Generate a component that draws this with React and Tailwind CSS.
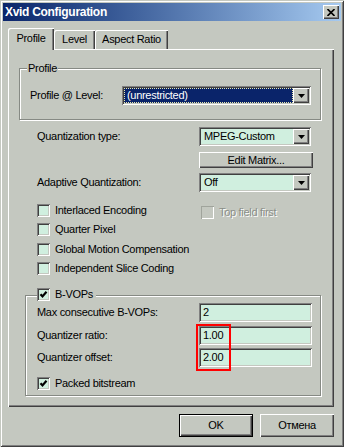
const sunken = 'shadow-[inset_1px_1px_0_#808080,inset_-1px_-1px_0_#ffffff,inset_2px_2px_0_#404040,inset_-2px_-2px_0_#c4c8c0]'
const raised = 'shadow-[inset_1px_1px_0_#ffffff,inset_-1px_-1px_0_#404040,inset_-2px_-2px_0_#808080]'

function Arrow() {
  return (
    <div className={`${raised} w-[16px] h-[15px] bg-[#c4c8c0] flex items-center justify-center shrink-0`}>
      <svg width="7" height="4" viewBox="0 0 7 4">
        <path d="M0 0h7L3.5 4z" fill="#000" />
      </svg>
    </div>
  )
}

function Dropdown({ value, className, selected }) {
  return (
    <div className={`${sunken} ${className} h-[19px] bg-[#d0efdf] flex items-center p-[2px]`}>
      {selected ? (
        <div className="flex-1 h-[15px] bg-[#0a246a] text-white border border-dotted border-[#e8e8b0] pl-[2px] leading-[13px]">
          {value}
        </div>
      ) : (
        <div className="flex-1 pl-[3px] leading-[15px]">{value}</div>
      )}
      <Arrow />
    </div>
  )
}

function TextBox({ value }) {
  return (
    <div className={`${sunken} w-[113px] h-[19px] bg-[#d0efdf] pl-[4px] leading-[19px]`}>{value}</div>
  )
}

function Check({ checked, disabled }) {
  return (
    <div
      className={`w-[13px] h-[13px] shrink-0 flex items-center justify-center ${
        disabled
          ? 'shadow-[inset_1px_1px_0_#a0a49c,inset_-1px_-1px_0_#ffffff] bg-[#c4c8c0]'
          : `${sunken} bg-[#d0efdf]`
      }`}
    >
      {checked && (
        <svg width="9" height="9" viewBox="0 0 9 9">
          <path d="M1.5 4.2l2 2.2 4-4.6" fill="none" stroke="#000" strokeWidth="2.2" />
        </svg>
      )}
    </div>
  )
}

function CheckRow({ label, checked, className = '' }) {
  return (
    <div className={`flex items-center gap-[5px] h-[13px] ${className}`}>
      <Check checked={checked} />
      <span className="leading-[13px]">{label}</span>
    </div>
  )
}

function Row({ label, children, className = '', labelW = 'w-[162px]' }) {
  return (
    <div className={`flex items-center h-[19px] ${className}`}>
      <span className={`${labelW} shrink-0`}>{label}</span>
      {children}
    </div>
  )
}

export default function App() {
  return (
    <div className="w-[344px] h-[447px] bg-[#c4c8c0] p-[3px] flex flex-col text-[11px] leading-[13px] tracking-[-0.3px] text-black [font-family:Liberation_Sans,Arial,sans-serif] shadow-[inset_1px_1px_0_#c4c8c0,inset_-1px_-1px_0_#404040,inset_2px_2px_0_#ffffff,inset_-2px_-2px_0_#808080]">
      {/* title bar */}
      <div className="h-[18px] bg-gradient-to-r from-[#0a246a] to-[#a6caf0] flex items-center justify-between pl-[2px] pr-[2px]">
        <span className="text-white font-bold text-[12px]">Xvid Configuration</span>
        <div className={`${raised} w-[16px] h-[14px] bg-[#c4c8c0] flex items-center justify-center`}>
          <svg width="8" height="7" viewBox="0 0 8 7">
            <path d="M0.5 0l7 7M7.5 0l-7 7" stroke="#000" strokeWidth="1.6" />
          </svg>
        </div>
      </div>

      {/* tabs */}
      <div className="mt-[7px] h-[21px] pl-[5px] flex items-end">
        <div className="relative z-10 -mb-[1px] w-[46px] h-[22px] bg-[#c4c8c0] rounded-tl-[2px] shadow-[inset_1px_1px_0_#ffffff,inset_-1px_0_0_#404040,inset_-2px_0_0_#808080] flex justify-center pt-[4px]">
          Profile
        </div>
        <div className="w-[41px] h-[19px] rounded-tl-[2px] shadow-[inset_1px_1px_0_#ffffff,inset_-1px_0_0_#404040,inset_-2px_0_0_#808080] flex justify-center pt-[3px]">
          Level
        </div>
        <div className="w-[73px] h-[19px] rounded-tl-[2px] shadow-[inset_1px_1px_0_#ffffff,inset_-1px_0_0_#404040,inset_-2px_0_0_#808080] flex justify-center pt-[3px]">
          Aspect Ratio
        </div>
      </div>

      {/* panel */}
      <div className={`${raised} ml-[5px] w-[326px] h-[358px] pl-[11px] flex flex-col`}>
        <div className="relative mt-[19px] w-[302px] h-[52px] border border-[#868a84] shadow-[inset_1px_1px_0_#ffffff,1px_1px_0_#ffffff] pl-[10px]">
          <span className="absolute -top-[7px] left-[7px] bg-[#c4c8c0] px-[1px]">Profile</span>
          <Row label="Profile @ Level:" labelW="w-[92px]" className="mt-[17px]">
            <Dropdown value="(unrestricted)" className="w-[189px]" selected />
          </Row>
        </div>

        <Row label="Quantization type:" className="mt-[7px] pl-[18px]">
          <Dropdown value="MPEG-Custom" className="w-[112px]" />
        </Row>
        <div className={`${raised} ml-[180px] mt-[6px] w-[114px] h-[16px] flex items-center justify-center`}>
          Edit Matrix...
        </div>
        <Row label="Adaptive Quantization:" className="mt-[5px] pl-[18px]">
          <Dropdown value="Off" className="w-[112px]" />
        </Row>

        <div className="mt-[12px] pl-[18px] flex items-start h-[13px]">
          <CheckRow label="Interlaced Encoding" className="w-[164px]" />
          <div className="flex items-center gap-[5px] mt-[2px]">
            <Check disabled />
            <span className="text-[#8a8e88] [text-shadow:1px_1px_0_#ffffff]">Top field first</span>
          </div>
        </div>
        <CheckRow label="Quarter Pixel" className="mt-[6px] ml-[18px]" />
        <CheckRow label="Global Motion Compensation" className="mt-[7px] ml-[18px]" />
        <CheckRow label="Independent Slice Coding" className="mt-[6px] ml-[18px]" />

        <div className="relative mt-[20px] ml-[6px] w-[296px] h-[101px] border border-[#868a84] shadow-[inset_1px_1px_0_#ffffff,1px_1px_0_#ffffff] pl-[11px] flex flex-col">
          <div className="absolute -top-[8px] left-[11px] bg-[#c4c8c0] pr-[3px] flex items-center gap-[5px] h-[13px]">
            <Check checked />
            <span>B-VOPs</span>
          </div>
          <Row label="Max consecutive B-VOPs:" className="mt-[7px]">
            <TextBox value="2" />
          </Row>
          <Row label="Quantizer ratio:" className="mt-[4px]">
            <TextBox value="1.00" />
          </Row>
          <Row label="Quantizer offset:" className="mt-[3px]">
            <TextBox value="2.00" />
          </Row>
          <CheckRow label="Packed bitstream" checked className="mt-[10px]" />
          <div className="absolute left-[170px] top-[28px] w-[35px] h-[47px] border-2 border-[#ff0000]" />
        </div>
      </div>

      {/* buttons */}
      <div className="mt-[7px] ml-[5px] w-[326px] flex justify-end gap-[7px]">
        <div className="w-[74px] h-[23px] border border-black">
          <div className={`${raised} w-full h-full flex items-center justify-center`}>OK</div>
        </div>
        <div className={`${raised} w-[74px] h-[23px] flex items-center justify-center`}>Отмена</div>
      </div>
    </div>
  )
}
